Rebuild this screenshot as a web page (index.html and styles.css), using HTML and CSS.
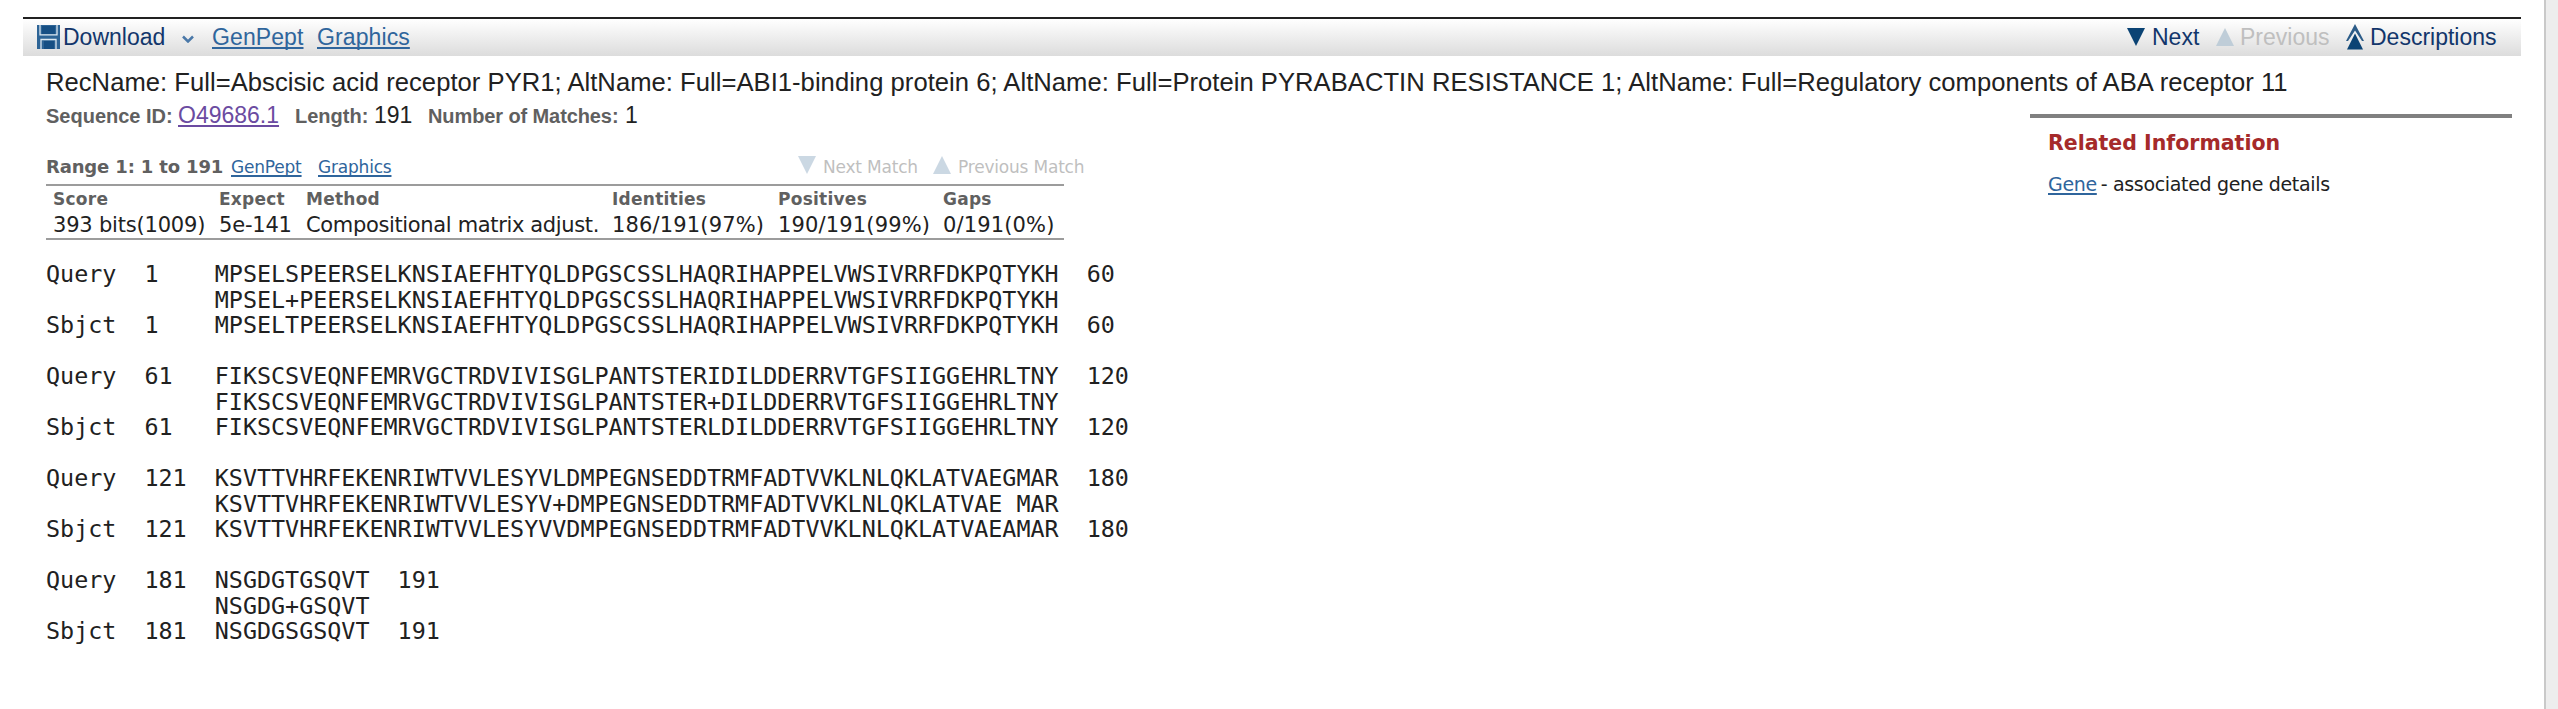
FILE: index.html
```
<!DOCTYPE html>
<html lang="en">
<head>
<meta charset="utf-8">
<title>Alignment</title>
<link rel="stylesheet" href="styles.css">
</head>
<body>
<div class="page">
<main class="content">
  <header class="toolbar">
    <div class="tools">
      <svg class="disk" viewBox="0 0 23 24"><path fill="#2d6496" d="M0 0h23v24H0z"/><path fill="#164f84" d="M5 1h13v8H5zM7 16h10v8H7z"/><path fill="none" stroke="#dce7f0" stroke-width="1.300" d="M3 0v9.800h17V0M4 24v-9.500h15V24"/></svg>
      <span class="download">Download</span>
      <svg class="chev" viewBox="0 0 12 8"><path fill="none" stroke="#4a78a8" stroke-width="2.500" d="M1 1.500l5 5 5-5"/></svg>
      <a>GenPept</a>
      <a>Graphics</a>
    </div>
    <nav class="nav">
      <svg viewBox="0 0 18 18"><path fill="#0b4374" d="M0 0h18L9 18z"/></svg>
      <span>Next</span>
      <svg viewBox="0 0 18 18"><path fill="#bfcdd8" d="M0 18h18L9 0z"/></svg>
      <span class="off">Previous</span>
      <svg class="double" viewBox="0 0 18 26"><path fill="#0b4374" d="M1 25.500h16L9 9.500z"/><path fill="#2c5c88" d="M0 17L9 0l9 17h-2L9 6.500 2 17z"/></svg>
      <span>Descriptions</span>
    </nav>
  </header>
  <div class="columns">
    <section class="result">
      <h1 class="title">RecName: Full=Abscisic acid receptor PYR1; AltName: Full=ABI1-binding protein 6; AltName: Full=Protein PYRABACTIN RESISTANCE 1; AltName: Full=Regulatory components of ABA receptor 11</h1>
      <div class="meta"><b>Sequence ID:</b><a>O49686.1</a><b>Length:</b><span>191</span><b>Number of Matches:</b><span>1</span></div>
      <div class="range"><b>Range 1: 1 to 191</b><a>GenPept</a><a>Graphics</a>
        <svg viewBox="0 0 18 18"><path fill="#cbd8e3" d="M0 0h18L9 18z"/></svg><span>Next Match</span>
        <svg viewBox="0 0 18 18"><path fill="#cbd8e3" d="M0 18h18L9 0z"/></svg><span>Previous Match</span></div>
      <div class="stats">
        <b>Score</b><b>Expect</b><b>Method</b><b>Identities</b><b>Positives</b><b>Gaps</b>
        <span class="tight">393 bits(1009)</span><span class="tight">5e-141</span><span class="tighter">Compositional matrix adjust.</span><span>186/191(97%)</span><span>190/191(99%)</span><span>0/191(0%)</span>
      </div>
      <pre class="align">Query  1    MPSELSPEERSELKNSIAEFHTYQLDPGSCSSLHAQRIHAPPELVWSIVRRFDKPQTYKH  60
            MPSEL+PEERSELKNSIAEFHTYQLDPGSCSSLHAQRIHAPPELVWSIVRRFDKPQTYKH
Sbjct  1    MPSELTPEERSELKNSIAEFHTYQLDPGSCSSLHAQRIHAPPELVWSIVRRFDKPQTYKH  60

Query  61   FIKSCSVEQNFEMRVGCTRDVIVISGLPANTSTERIDILDDERRVTGFSIIGGEHRLTNY  120
            FIKSCSVEQNFEMRVGCTRDVIVISGLPANTSTER+DILDDERRVTGFSIIGGEHRLTNY
Sbjct  61   FIKSCSVEQNFEMRVGCTRDVIVISGLPANTSTERLDILDDERRVTGFSIIGGEHRLTNY  120

Query  121  KSVTTVHRFEKENRIWTVVLESYVLDMPEGNSEDDTRMFADTVVKLNLQKLATVAEGMAR  180
            KSVTTVHRFEKENRIWTVVLESYV+DMPEGNSEDDTRMFADTVVKLNLQKLATVAE MAR
Sbjct  121  KSVTTVHRFEKENRIWTVVLESYVVDMPEGNSEDDTRMFADTVVKLNLQKLATVAEAMAR  180

Query  181  NSGDGTGSQVT  191
            NSGDG+GSQVT
Sbjct  181  NSGDGSGSQVT  191</pre>
    </section>
    <aside class="related">
      <h2>Related Information</h2>
      <p><a>Gene</a><span>- associated gene details</span></p>
    </aside>
  </div>
</main>
<div class="scroll"></div>
</div>
</body>
</html>
```
FILE: styles.css
```
*{box-sizing:border-box}
body{margin:0;background:#fff;color:#212121;overflow:hidden;font-family:"DejaVu Sans",Verdana,sans-serif}
svg{display:block;width:18px;height:18px}
a{text-decoration:underline 2px;text-underline-offset:2px;text-decoration-skip-ink:none;color:#2f659c}
.page{display:flex;height:709px}
.content{width:2544px;padding:17px 23px 0;flex:none}
.scroll{width:14px;background:#ededed;border-left:2px solid #c9c9c9}
.toolbar{height:39px;border-top:2px solid #212121;background:linear-gradient(#fff,#dcdcdc);display:flex;justify-content:space-between;font:23px/37px "Liberation Sans",Arial,sans-serif;color:#12366b;white-space:nowrap}
.tools{display:grid;grid-template-columns:26px 119px 30px 105px 100px;padding-left:14px;align-items:start}
.tools a{justify-self:start;letter-spacing:.1px}
.disk{width:23px;height:24px;margin-top:6px}
.chev{width:12px;height:8px;margin-top:16px}
.nav{display:grid;grid-template-columns:25px 64px 24px 106px 24px 151px;align-items:start}
.nav svg{margin-top:9px}
.nav .double{height:26px;margin-top:5px}
.off{color:#bfbfbf}
.columns{display:flex;justify-content:space-between}
.result{padding-left:23px;width:1600px}
.title{margin:0;padding-top:1px;font:25.600px/50px "Liberation Sans",Arial,sans-serif;letter-spacing:.035px;white-space:nowrap;width:2300px}
.meta,.range{white-space:nowrap;display:grid}
.meta{height:20px;margin-top:-2px;align-items:baseline;grid-template-columns:132px 117px 79px 54px 197px 20px;font:23px/20px "Liberation Sans",Arial,sans-serif}
.meta b{font-size:20px;color:#606060}
.meta b:nth-of-type(3){letter-spacing:-.1px}
.meta a{color:#6b4ba1;justify-self:start}
.range{margin-top:32px;height:27px;grid-template-columns:185px 87px 480px 25px 110px 25px 130px;font-size:17px;line-height:20px;letter-spacing:-.2px;color:#bfbfbf}
.range a{justify-self:start}
.range svg{margin-top:-1px}
.range b{color:#606060;font-size:18px;letter-spacing:-.15px}
.stats{display:grid;grid-template:24px 25px / 166px 87px 306px 166px 165px 120px;width:1018px;height:56px;border:solid #9c9c9c;border-width:2px 0;padding:3px 0 0 7px;white-space:nowrap;font-size:21px;letter-spacing:.15px}
.stats b{font-size:17px;letter-spacing:.25px;color:#606060}
.stats .tight{letter-spacing:-.2px}
.stats .tighter{letter-spacing:-.35px}
.align{margin:22px 0 0;font:23.370px/25.500px "DejaVu Sans Mono",monospace}
.related{width:482px;margin:58px 9px 0 0;border-top:4px solid #808080;padding-left:18px;height:100px;white-space:nowrap}
.related h2{margin:10px 0 0;font-size:20.500px;line-height:30px;color:#a52a2a}
.related p{margin:14px 0;font-size:19px;line-height:24px;display:flex;gap:4px;letter-spacing:-.34px}
```
